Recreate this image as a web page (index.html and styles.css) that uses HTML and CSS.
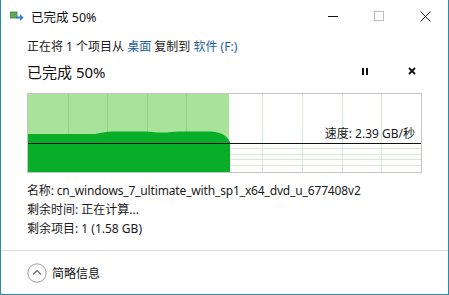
FILE: index.html
```html
<!DOCTYPE html>
<html lang="zh">
<head>
<meta charset="utf-8">
<link rel="stylesheet" href="styles.css">
</head>
<body>
<div class="window">
  <div class="titlebar">
    <svg class="app-icon" width="14" height="11" viewBox="0 0 14 11">
      <rect x="0" y="1" width="7" height="6" fill="#5fa85a"/>
      <rect x="0" y="1" width="7" height="6" fill="none" stroke="#3d7d3a" stroke-width="0.8"/>
      <path d="M6 5.5 H10 V3 L13.5 6.5 L10 10 V7.5 H6 Z" fill="#3a7fc6"/>
    </svg>
    <span class="title">已完成 50%</span>
    <div class="controls">
      <span class="ctl"><svg width="10" height="10" viewBox="0 0 10 10"><path d="M0 5.5 H10" stroke="#111" stroke-width="1"/></svg></span>
      <span class="ctl"><svg width="10" height="10" viewBox="0 0 10 10"><rect x="0.5" y="0.5" width="9" height="9" fill="none" stroke="#bdbdbd" stroke-width="1"/></svg></span>
      <span class="ctl"><svg width="11" height="11" viewBox="0 0 11 11"><path d="M0.5 0.5 L10.5 10.5 M10.5 0.5 L0.5 10.5" stroke="#222" stroke-width="1"/></svg></span>
    </div>
  </div>
  <div class="content">
    <div class="line1">正在将 1 个项目从 <span class="link">桌面</span> 复制到 <span class="link">软件 (F:)</span></div>
    <div class="progress-row">
      <span class="big">已完成 50%</span>
      <div class="actions">
        <svg width="6" height="7" viewBox="0 0 6 7"><rect x="0" y="0" width="2" height="7" fill="#111"/><rect x="4" y="0" width="2" height="7" fill="#111"/></svg>
        <svg width="8" height="8" viewBox="0 0 8 8"><path d="M1 1 L7 7 M7 1 L1 7" stroke="#111" stroke-width="1.8"/></svg>
      </div>
    </div>
    <div class="chart">
      <svg width="395" height="80" viewBox="0 0 395 80">
        <rect x="0" y="0" width="202" height="80" fill="#a9e29a"/>
        <g stroke="#93d184" stroke-width="1">
          <path d="M41.5 0 V80 M80.5 0 V80 M120.5 0 V80 M159.5 0 V80"/>
        </g>
        <g stroke="#d5e9d5" stroke-width="1">
          <path d="M235.5 0 V80 M275.5 0 V80 M315.5 0 V80 M354.5 0 V80"/>
          <path d="M202 55.5 H395 M202 61.5 H395 M202 66.5 H395 M202 72.5 H395"/>
        </g>
        <path d="M0 41 L68 41 C74 40 78 38.5 88 38.5 L118 38.5 C124 38.5 126 39.5 132 39.5 L140 39.5 C146 38.5 150 38.5 156 38.5 L180 38.5 C192 38.5 199 41 203 49 L203 80 L0 80 Z" fill="#08ad28"/>
        <path d="M0 50.5 H395" stroke="#111" stroke-width="1.2"/>
        <rect x="0.5" y="0.5" width="394" height="79" fill="none" stroke="#c4c4c4" stroke-width="1"/>
      </svg>
      <span class="speed">速度: 2.39 GB/秒</span>
    </div>
    <div class="details">
      <div class="name">名称: cn_windows_7_ultimate_with_sp1_x64_dvd_u_677408v2</div>
      <div>剩余时间: 正在计算...</div>
      <div>剩余项目: 1 (1.58 GB)</div>
    </div>
  </div>
  <div class="footer">
    <svg class="chev" width="20" height="20" viewBox="0 0 20 20">
      <circle cx="10" cy="10" r="9.2" fill="none" stroke="#9a9a9a" stroke-width="1"/>
      <path d="M6 11.5 L10 7.5 L14 11.5" fill="none" stroke="#666" stroke-width="1.1"/>
    </svg>
    <span>简略信息</span>
  </div>
</div>
</body>
</html>
```
FILE: styles.css
```css
html, body {
  margin: 0;
  padding: 0;
  background: #ffffff;
}
body {
  font-family: "Noto Sans", "Noto Sans CJK SC", sans-serif;
  font-size: 12px;
  color: #1a1a1a;
}
.window {
  width: 449px;
  height: 295px;
  box-sizing: border-box;
  border: 1px solid #2a8ca4;
  border-top: none;
  display: flex;
  flex-direction: column;
  background: #fff;
}
.titlebar {
  height: 32px;
  display: flex;
  align-items: center;
  padding-left: 9px;
  flex: none;
}
.app-icon {
  margin-right: 7px;
  margin-top: 1px;
}
.title {
  font-size: 12.5px;
  color: #111;
  flex: 1;
}
.controls {
  display: flex;
  height: 100%;
}
.ctl {
  width: 46px;
  display: flex;
  align-items: center;
  justify-content: center;
}
.content {
  padding: 6px 0 0 26px;
  flex: 1;
}
.line1 {
  height: 18px;
  line-height: 18px;
  color: #1a1a1a;
}
.link {
  color: #1c5f9e;
}
.progress-row {
  display: flex;
  align-items: center;
  height: 30px;
  margin-right: 26px;
}
.big {
  font-size: 15px;
  flex: 1;
  color: #111;
}
.actions {
  display: flex;
  align-items: center;
  gap: 40px;
  padding-right: 6px;
}
.chart {
  position: relative;
  width: 395px;
  height: 80px;
  margin-top: 7px;
}
.chart svg {
  display: block;
}
.speed {
  position: absolute;
  right: 7px;
  top: 31px;
  font-size: 12px;
  color: #1a1a1a;
}
.details {
  margin-top: 8px;
  line-height: 19px;
  color: #1a1a1a;
}
.name {
  letter-spacing: -0.15px;
}
.footer {
  flex: none;
  height: 43px;
  border-top: 1px solid #dcdcdc;
  display: flex;
  align-items: center;
  padding-left: 26px;
  gap: 5px;
  font-size: 12px;
  color: #111;
}
```
